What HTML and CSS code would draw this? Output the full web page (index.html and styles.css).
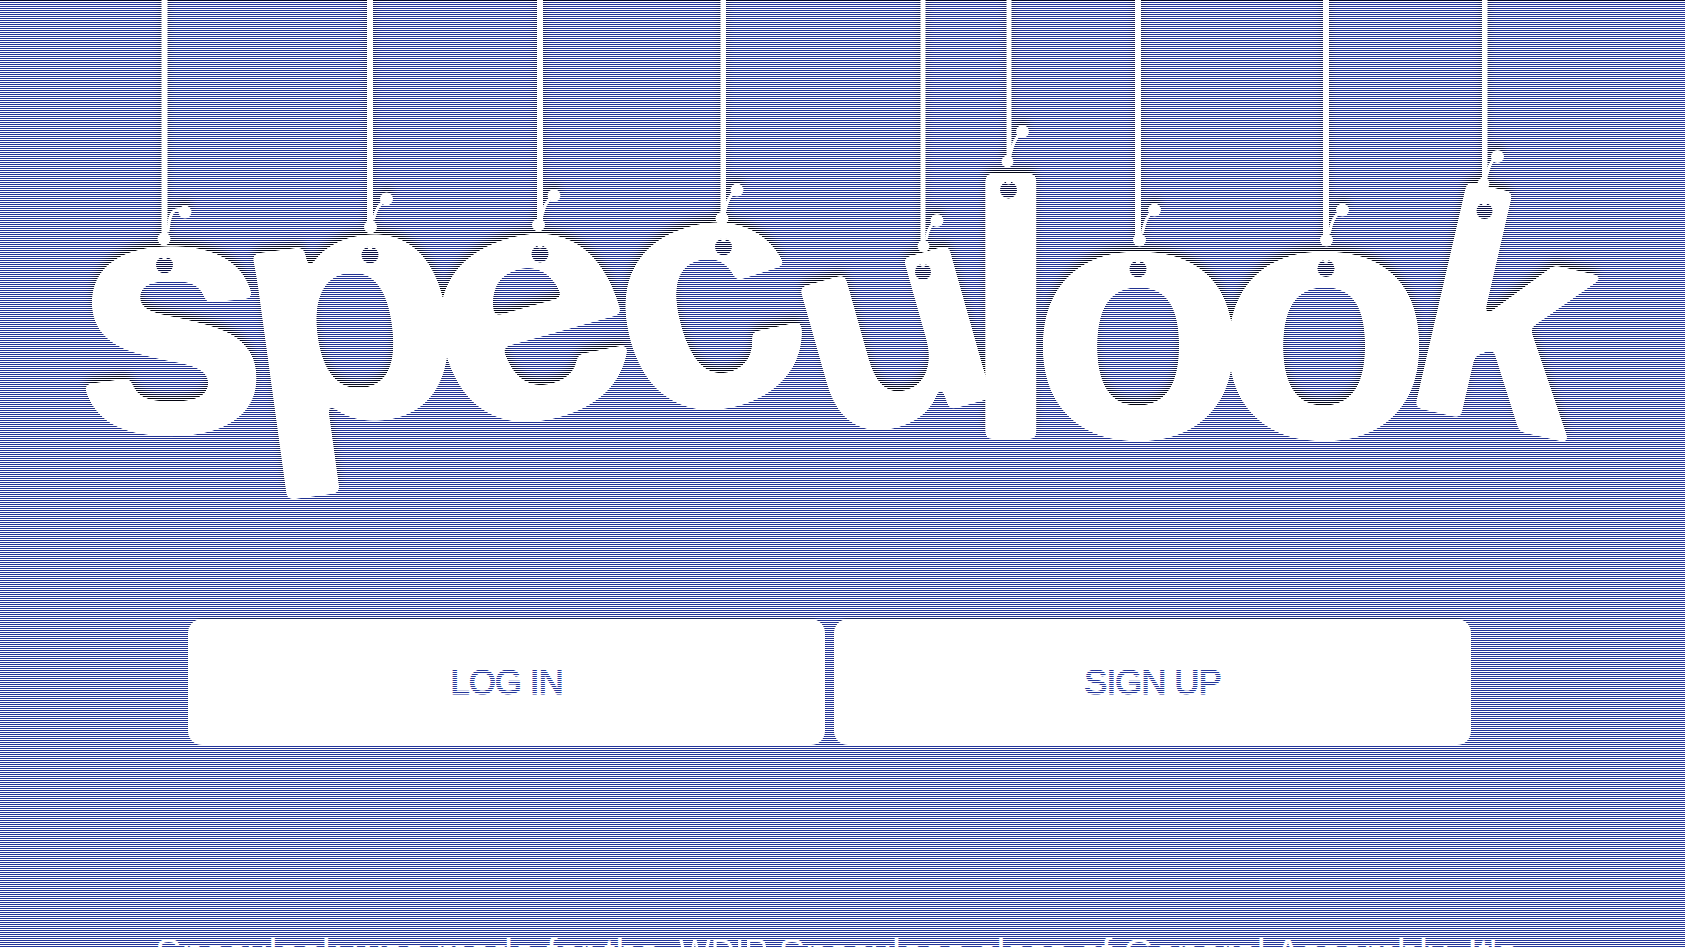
FILE: index.html
```html
<!DOCTYPE html>
<html lang="en">
<head>
    <meta charset="UTF-8">
    <meta name="viewport" content="width=device-width, initial-scale=1.0">
    <title>Speculook</title>

    <link rel="stylesheet" href="styles.css">
</head>
<body>

    <header class="logo">
        <svg class="logo-art" viewBox="0 0 1685 619" width="1685" height="619">
            <defs>
                <filter id="soften">
                    <feGaussianBlur stdDeviation="3.5"/>
                    <feComponentTransfer>
                        <feFuncA type="linear" slope="12" intercept="-5.5"/>
                    </feComponentTransfer>
                </filter>
                <g id="hole-spots">
                    <circle cx="164.5" cy="265" r="8.5"/>
                    <circle cx="370" cy="255" r="8.5"/>
                    <circle cx="540" cy="254" r="8.5"/>
                    <circle cx="723.5" cy="247" r="8.5"/>
                    <circle cx="923" cy="272" r="8"/>
                    <circle cx="1008.5" cy="190" r="8.5"/>
                    <circle cx="1138" cy="269" r="8.5"/>
                    <circle cx="1326" cy="268.5" r="8.5"/>
                    <circle cx="1484.5" cy="211" r="8"/>
                </g>
                <mask id="holes" maskUnits="userSpaceOnUse" x="0" y="0" width="1685" height="619">
                    <rect width="1685" height="619" fill="#fff"/>
                    <use href="#hole-spots" fill="#000"/>
                </mask>
            </defs>
            <g class="hanging">
                <!-- dark behind the punched holes -->
                <use class="hole-shade" href="#hole-spots"/>

                <!-- letters, each one turned around its own baseline -->
                <g mask="url(#holes)">
                    <text class="letter" transform="translate(171.5 431) scale(1 .97)">s</text>
                    <text class="letter" transform="translate(363 418) rotate(-7.8) scale(1.02 .95)">p</text>
                    <text class="letter" transform="translate(555 413) rotate(-15.7) scale(1.04 .95)">e</text>
                    <text class="letter" transform="translate(733 402) rotate(-15) scale(.97 .95)">c</text>
                    <text class="letter" transform="translate(918 417) rotate(-15.8) scale(.9 .84)">u</text>
                    <text class="letter" transform="translate(1011 437) scale(.98 1.03)">l</text>
                    <text class="letter" transform="translate(1138 436) scale(1 .97)">o</text>
                    <text class="letter" transform="translate(1324 436) scale(1 .97)">o</text>
                    <text class="letter" transform="translate(1481 421) rotate(13) scale(.9)">k</text>
                </g>

                <!-- strings -->
                <rect class="string" x="161.5" y="0" width="6" height="240"/>
                <rect class="string" x="367" y="0" width="6" height="228"/>
                <rect class="string" x="537" y="0" width="6" height="226"/>
                <rect class="string" x="720.5" y="0" width="5.5" height="219"/>
                <rect class="string" x="920.5" y="0" width="5" height="247"/>
                <rect class="string" x="1006.5" y="0" width="5" height="162"/>
                <rect class="string" x="1135" y="0" width="6" height="241"/>
                <rect class="string" x="1323" y="0" width="6" height="241"/>
                <rect class="string" x="1482" y="0" width="5.5" height="184"/>

                <!-- knots and curled ends -->
                <g transform="translate(164 239)">
                    <circle r="6.5"/><circle class="ball" cx="21" cy="-27" r="6.5"/>
                    <path class="tail" d="M4 -8C5 -15 5 -24 10 -28Q14 -31 21 -28"/>
                </g>
                <g transform="translate(370.5 227)">
                    <circle r="6.5"/><circle class="ball" cx="16" cy="-28" r="6.5"/>
                    <path class="tail" d="M3 -8C5 -15 7 -22 16 -28"/>
                </g>
                <g transform="translate(538.5 225)">
                    <circle r="6.5"/><circle class="ball" cx="15.5" cy="-29.5" r="6.5"/>
                    <path class="tail" d="M3 -8C5 -15 6 -23 15 -29"/>
                </g>
                <g transform="translate(722 218.5)">
                    <circle r="6.5"/><circle class="ball" cx="15" cy="-28.5" r="6.5"/>
                    <path class="tail" d="M3 -8C5 -15 6 -23 15 -28"/>
                </g>
                <g transform="translate(923.5 246)">
                    <circle r="6"/><circle class="ball" cx="13.5" cy="-25.5" r="6.5"/>
                    <path class="tail" d="M3 -8C4 -14 6 -21 13 -25"/>
                </g>
                <g transform="translate(1007.5 161.5)">
                    <circle r="6"/><circle class="ball" cx="15" cy="-30" r="6.5"/>
                    <path class="tail" d="M3 -8C5 -15 7 -24 15 -30"/>
                </g>
                <g transform="translate(1139.5 240)">
                    <circle r="6.5"/><circle class="ball" cx="15" cy="-30" r="6.5"/>
                    <path class="tail" d="M3 -8C5 -15 6 -24 15 -30"/>
                </g>
                <g transform="translate(1326.5 240)">
                    <circle r="6.5"/><circle class="ball" cx="16" cy="-30" r="6.5"/>
                    <path class="tail" d="M3 -8C5 -15 6 -24 16 -30"/>
                </g>
                <g transform="translate(1483.5 183.5)">
                    <circle r="6"/><circle class="ball" cx="14" cy="-27" r="6.5"/>
                    <path class="tail" d="M3 -8C5 -14 6 -22 14 -27"/>
                </g>

                <!-- little bumps at the top of each hole -->
                <circle cx="164.5" cy="257" r="2.5"/>
                <circle cx="370" cy="247" r="2.5"/>
                <circle cx="540" cy="246" r="2.5"/>
                <circle cx="723.5" cy="239" r="2.5"/>
                <circle cx="923" cy="264.5" r="2.5"/>
                <circle cx="1008.5" cy="182" r="2.5"/>
                <circle cx="1138" cy="261" r="2.5"/>
                <circle cx="1326" cy="260.5" r="2.5"/>
                <circle cx="1484.5" cy="203.5" r="2.5"/>
            </g>
        </svg>
    </header>

    <nav class="actions">
        <a class="action-button" href="#">LOG IN</a>
        <a class="action-button" href="#">SIGN UP</a>
    </nav>

    <p class="intro">Speculook was made for the <span class="narrow">WDIR</span> Speculoos class of General Assembly. It's</p>

    <!-- white lines laid over the whole page -->
    <div class="scanlines"></div>

</body>
</html>
```

FILE: styles.css
```css
html, body {
    height: 100%;
    overflow: hidden;
}

body {
    margin: 0;
    padding: 0;
    background-color: #24359a;
    font-family: 'Liberation Sans', Arial, sans-serif;
    box-shadow: inset 0 1px 0 #05092e;
}

/* Overlay that gives the striped look */
.scanlines {
    position: fixed;
    top: 0;
    left: 0;
    right: 0;
    bottom: 0;
    pointer-events: none;
    background-image: repeating-linear-gradient(to bottom, transparent 0, transparent 1px, #fff 1px, #fff 2px);
}

.logo {
    height: 619px;
}

.logo-art {
    display: block;
}

.hanging {
    fill: #fff;
    filter: drop-shadow(0 -6px 4px #000);
}

.hole-shade {
    fill: #0a1045;
}

.letter {
    font-family: 'Liberation Sans', Arial, sans-serif;
    font-weight: bold;
    font-size: 350px;
    text-anchor: middle;
    stroke: #fff;
    stroke-width: 4px;
    stroke-linejoin: round;
    filter: url(#soften);
}

.string {
    fill: #fff;
}

.tail {
    fill: none;
    stroke: #fff;
    stroke-width: 3px;
    stroke-linecap: round;
}

.actions {
    display: flex;
    gap: 9px;
    padding-left: 188px;
}

.action-button {
    display: flex;
    align-items: center;
    justify-content: center;
    width: 637px;
    height: 126px;
    background-color: #fff;
    border-radius: 14px;
    box-shadow: 0 -1px 2px rgba(0, 0, 0, 0.5);
    color: #24359a;
    font-size: 35px;
    letter-spacing: -1px;
    -webkit-text-stroke: 1px #24359a;
    text-decoration: none;
}

.intro {
    margin: 186px 0 0 155px;
    color: #fff;
    font-size: 40px;
    white-space: nowrap;
}

.narrow {
    display: inline-block;
    margin: 0 -18px 0 8px;
    transform: scaleX(0.84);
    transform-origin: left;
}
```
